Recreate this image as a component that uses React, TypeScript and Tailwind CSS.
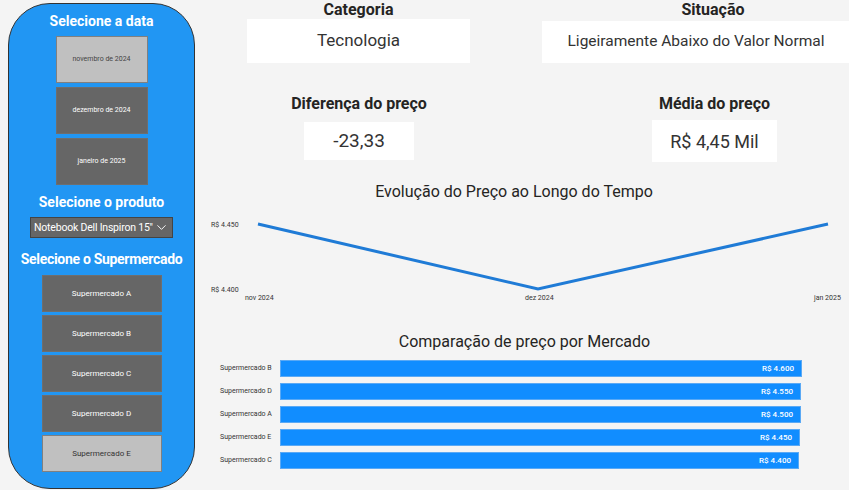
import { ChevronDown } from "lucide-react"

const dates = [
  { label: "novembro de 2024", active: true },
  { label: "dezembro de 2024", active: false },
  { label: "janeiro de 2025", active: false },
]

const markets = [
  { label: "Supermercado A", active: false },
  { label: "Supermercado B", active: false },
  { label: "Supermercado C", active: false },
  { label: "Supermercado D", active: false },
  { label: "Supermercado E", active: true },
]

const prices = [
  { name: "Supermercado B", value: "R$ 4.600", width: 522 },
  { name: "Supermercado D", value: "R$ 4.550", width: 521 },
  { name: "Supermercado A", value: "R$ 4.500", width: 521 },
  { name: "Supermercado E", value: "R$ 4.450", width: 520 },
  { name: "Supermercado C", value: "R$ 4.400", width: 519 },
]

const font = "font-['Roboto',sans-serif]"

function Slicer() {
  return (
    <div className="ml-[8px] mt-[3px] flex h-[486px] w-[187px] shrink-0 flex-col items-center whitespace-nowrap rounded-[42px] border-[1.5px] border-[#333] bg-[#2196f3]">
      <h2 className="mt-[8px] text-[14px] font-bold leading-[18px] text-white">Selecione a data</h2>
      <div className="mt-[6px] flex flex-col gap-[4px]">
        {dates.map(d => (
          <div
            key={d.label}
            className={`flex h-[47px] w-[92px] items-center justify-center border text-[7px] ${d.active ? "border-[#808080] bg-[#c0c0c0] text-[#444]" : "border-[#6e6e6e] bg-[#666] text-white"}`}
          >
            {d.label}
          </div>
        ))}
      </div>
      <h2 className="mt-[8px] text-[14px] font-bold leading-[18px] text-white">Selecione o produto</h2>
      <div className="mt-[6px] flex h-[21px] w-[143px] items-center justify-between border border-[#444] bg-[#666] pl-[3px] pr-[3px] text-[10.5px] tracking-[-0.2px] text-white">
        <span>Notebook Dell Inspiron 15"</span>
        <ChevronDown className="h-[15px] w-[15px] shrink-0" strokeWidth={1.5} />
      </div>
      <h2 className="mt-[12px] text-[14px] font-bold leading-[18px] tracking-[-0.3px] text-white">Selecione o Supermercado</h2>
      <div className="mt-[7px] flex flex-col gap-[3px]">
        {markets.map(m => (
          <div
            key={m.label}
            className={`flex h-[37px] w-[120px] items-center justify-center border text-[8px] ${m.active ? "border-[#808080] bg-[#c0c0c0] text-[#333]" : "border-[#6e6e6e] bg-[#666] text-white"}`}
          >
            {m.label}
          </div>
        ))}
      </div>
    </div>
  )
}

function Card({ label, value, boxClass, valueClass, labelClass = "" }: { label: string; value: string; boxClass: string; valueClass: string; labelClass?: string }) {
  return (
    <div className="flex flex-col items-center whitespace-nowrap">
      <div className={`text-[16px] font-bold leading-[18px] text-[#252423] ${labelClass}`}>{label}</div>
      <div className={`flex items-center justify-center bg-white text-[#333] ${boxClass}`}>
        <span className={valueClass}>{value}</span>
      </div>
    </div>
  )
}

function LineChart() {
  return (
    <svg width="649" height="104" viewBox="0 0 649 104" className="block">
      <text x="10" y="27" fontSize="7" fill="#333">R$ 4.450</text>
      <text x="10" y="92" fontSize="7" fill="#333">R$ 4.400</text>
      <polyline points="57,24 337,89 627,24" fill="none" stroke="#1f7bd6" strokeWidth="3" strokeLinejoin="miter" />
      <text x="44" y="100" fontSize="7" fill="#333">nov 2024</text>
      <text x="324" y="100" fontSize="7" fill="#333">dez 2024</text>
      <text x="613" y="100" fontSize="7" fill="#333">jan 2025</text>
    </svg>
  )
}

export default function App() {
  return (
    <div className={`flex h-[490px] w-[849px] overflow-hidden bg-[#f4f4f4] ${font}`}>
      <Slicer />
      <div className="ml-[2px] flex w-[655px] flex-col">
        <div className="mt-[1px] flex">
          <div className="ml-[50px] w-[223px]">
            <Card label="Categoria" value="Tecnologia" boxClass="h-[44px] w-[223px]" valueClass="text-[17px]" />
          </div>
          <div className="ml-[72px] w-[308px] shrink-0">
            <Card label="Situação" value="Ligeiramente Abaixo do Valor Normal" labelClass="ml-[34px]" boxClass="mt-[2px] h-[42px] w-[308px]" valueClass="text-[15.5px]" />
          </div>
        </div>
        <div className="mt-[32px] flex">
          <div className="ml-[92px] w-[140px]">
            <Card label="Diferença do preço" value="-23,33" boxClass="mt-[9px] h-[38px] w-[110px]" valueClass="text-[19px]" />
          </div>
          <div className="ml-[223px] w-[125px]">
            <Card label="Média do preço" value="R$ 4,45 Mil" boxClass="mt-[7px] h-[42px] w-[125px]" valueClass="text-[18px]" />
          </div>
        </div>
        <div className="mt-[20px] whitespace-nowrap pr-[19px] text-center text-[16px] leading-[20px] text-[#252423]">Evolução do Preço ao Longo do Tempo</div>
        <div className="-ml-[196px] mt-[-2px] pl-[200px]">
          <LineChart />
        </div>
        <div className="mt-[28px] whitespace-nowrap pl-[2px] text-center text-[16px] leading-[20px] text-[#252423]">Comparação de preço por Mercado</div>
        <div className="mt-[8px] flex flex-col gap-[6px]">
          {prices.map(p => (
            <div key={p.name} className="flex h-[17px] items-center">
              <span className="w-[83px] whitespace-nowrap pl-[23px] text-[7px] text-[#333]">{p.name}</span>
              <div
                className="flex h-[17px] items-center justify-end border border-[#5aa9f5] bg-[#118dff] pr-[7px] text-[8px] font-medium text-white"
                style={{ width: `${p.width}px` }}
              >
                {p.value}
              </div>
            </div>
          ))}
        </div>
      </div>
    </div>
  )
}
